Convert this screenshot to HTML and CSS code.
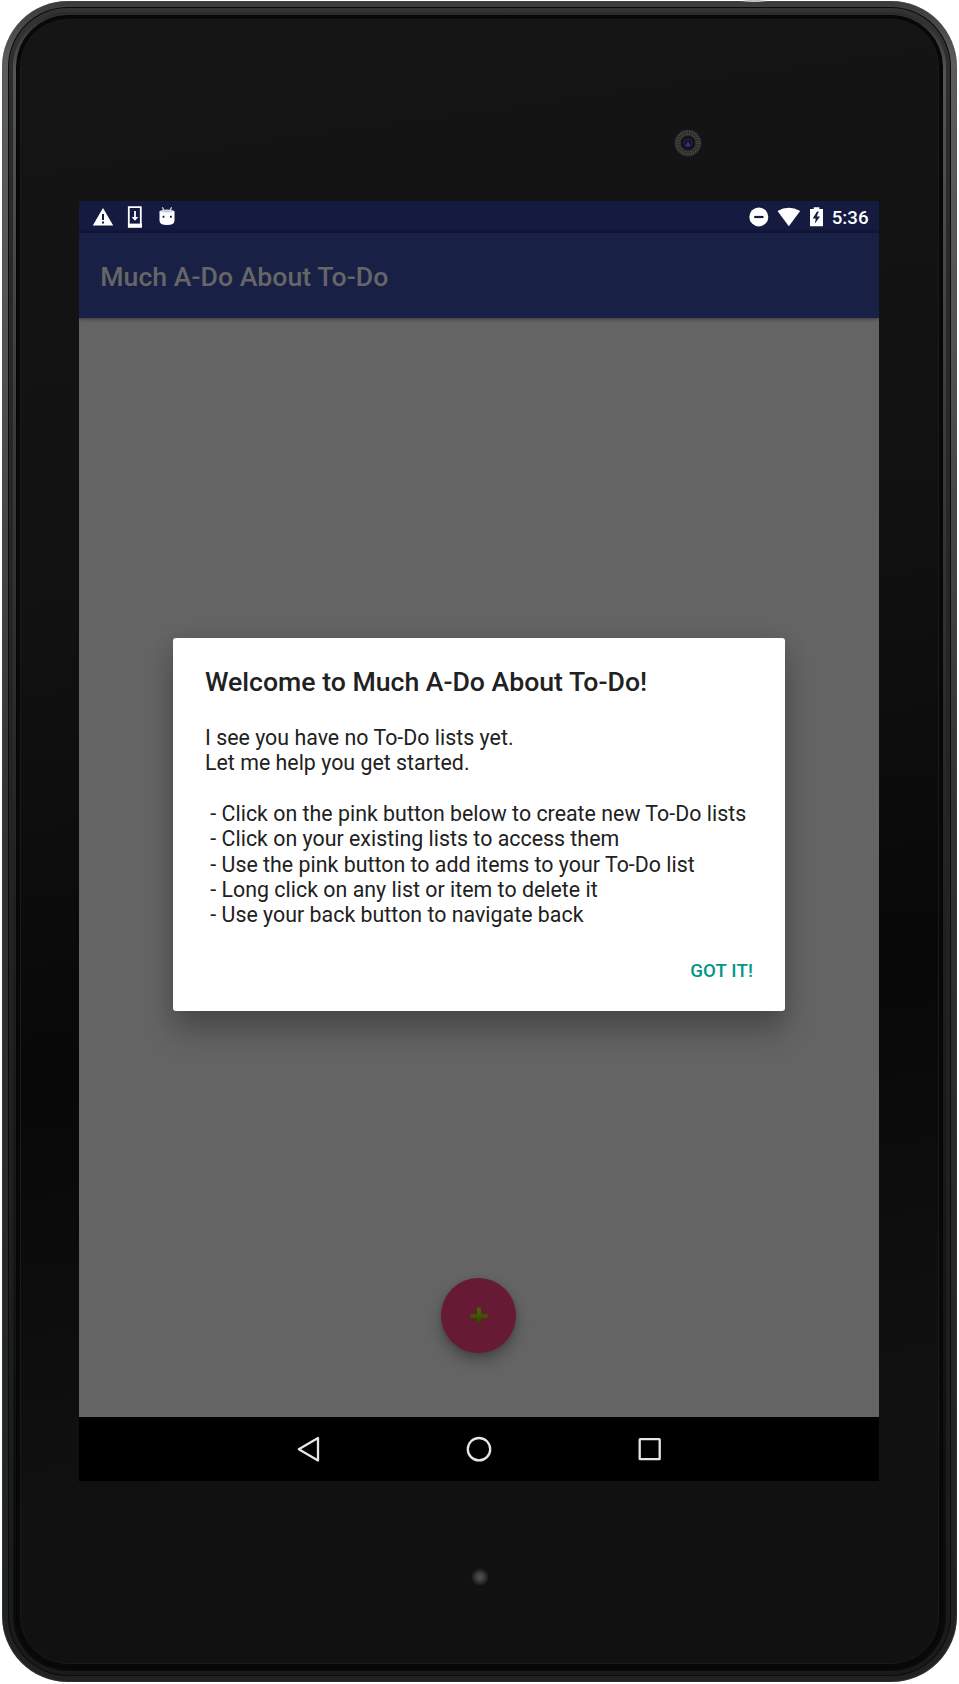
FILE: index.html
```html
<!DOCTYPE html>
<html lang="en">
<head>
<meta charset="utf-8">
<title>Much A-Do About To-Do</title>
<link rel="stylesheet" href="styles.css">
</head>
<body>
<div class="device">
  <div class="power-key"></div>
  <div class="groove"><div class="ring"><div class="highlight"><div class="glass">
    <svg class="camera" viewBox="0 0 28 28">
      <circle cx="14" cy="14" r="13.5" fill="#2c2c2c"/>
      <circle cx="14" cy="14" r="11.500" fill="none" stroke="#555" stroke-width="1.500" stroke-dasharray="1 1.3"/>
      <circle cx="14" cy="14" r="9" fill="none" stroke="#4c4c4c" stroke-width="1.500" stroke-dasharray="1.200 1.500"/>
      <circle cx="14" cy="14" r="7" fill="#111"/>
      <circle cx="14" cy="14" r="4" fill="#10101c" stroke="#303038"/>
      <path d="M11.500 17l2.500-5.500 2.500 5.500z" fill="#2630b0"/>
    </svg>
    <div class="screen">
      <div class="status">
        <svg class="status-left" viewBox="0 0 110 32">
          <path d="M13.8 24.6h20.4L24 7z" fill="#fff"/>
          <path d="M23 13h2v6h-2zM23 20.6h2v2h-2z" fill="#141a40"/>
          <path d="M49.8 6.2h12v19.5h-12z" fill="none" stroke="#fff" stroke-width="1.8"/>
          <path d="M49 22.6h14v4H49z" fill="#fff"/>
          <path d="M55.1 10h1.8v6h2.5L56 19.7 52.600 16h2.500z" fill="#fff"/>
          <path d="M83.400 6.200l1.400 3M92.600 6.200l-1.400 3" stroke="#d9dae3" stroke-width="1.300"/>
          <path d="M80.500 10Q88 7 95.500 10v9.500q0 4.500-7.500 4.500t-7.500-4.500z" fill="#fff"/>
          <path d="M81 10.300Q88 7.500 95 10.300 88 13 81 10.300z" fill="#cbccd9"/>
          <path d="M83.600 14.800h1.800v2h-1.800zM91 14.800h1.800v2H91z" fill="#141a40"/>
        </svg>
        <div class="status-right">
          <svg class="status-icons" viewBox="0 0 76 32">
            <circle cx="10.800" cy="15.900" r="9.500" fill="#fff"/>
            <path d="M6.200 14.900h9.300v2.200H6.200z" fill="#141a40"/>
            <path d="M29.500 9.900Q40.800 3.400 52.200 9.900L40.800 25.300z" fill="#fff"/>
            <path d="M62 8h3.700V6.200h5.700V8h3.600v17.300H62z" fill="#fff"/>
            <path d="M69 10.500l-4.300 7h3l-.8 5 5.200-7h-3.300l2-5z" fill="#141a40"/>
          </svg>
          <span class="time">5:36</span>
        </div>
      </div>
      <div class="appbar">Much A-Do About To-Do</div>
      <div class="content">
        <div class="dialog">
          <h1 class="dialog-title">Welcome to Much A-Do About To-Do!</h1>
          <div class="dialog-body">I see you have no To-Do lists yet.
Let me help you get started.

 - Click on the pink button below to create new To-Do lists
 - Click on your existing lists to access them
 - Use the pink button to add items to your To-Do list
 - Long click on any list or item to delete it
 - Use your back button to navigate back</div>
          <div class="dialog-action">GOT IT!</div>
        </div>
        <div class="fab">
          <svg class="plus" viewBox="0 0 18 18">
            <defs><linearGradient id="leaf" x1="0" y1="0" x2="0" y2="1"><stop offset="0" stop-color="#456600"/><stop offset=".45" stop-color="#3d5c00"/><stop offset="1" stop-color="#2b4300"/></linearGradient></defs>
            <path d="M7 .700h4v6.500h6.700V11H11v6H7v-6H.300V7.200H7z" fill="url(#leaf)"/>
          </svg>
        </div>
      </div>
      <div class="nav">
        <svg class="nav-icons" viewBox="0 0 440 64" fill="none" stroke="#e6e6e6" stroke-width="2.300" stroke-linejoin="round">
          <path d="M58 21v22.500L38.800 32.200z"/>
          <circle cx="219" cy="32.200" r="11.200"/>
          <rect x="379.700" y="22.200" width="20" height="20" rx=".5"/>
        </svg>
      </div>
    </div>
    <div class="led"></div>
  </div></div></div></div>
</div>
</body>
</html>
```
FILE: styles.css
```css
* { box-sizing: border-box; }
body {
  margin: 0;
  padding: 1px 2px 2px;
  background: #fff;
  font-family: Roboto, sans-serif;
  height: 1684px;
  overflow: hidden;
}
.device {
  position: relative;
  height: 1681px;
  padding: 6px;
  border-radius: 66px;
  background: linear-gradient(180deg, #393b3b 0, #5c5d5d 60px, #555 300px, #333 800px, #242525 1400px, #202121 100%);
  box-shadow: inset 0 0 2px #555;
}
.power-key {
  position: absolute;
  left: 738px;
  top: -1px;
  width: 28px;
  height: 2px;
  background: radial-gradient(ellipse at 50% 50%, #f4f4f4 0, #bbb 40%, transparent 75%);
}
.groove {
  height: 100%;
  padding: 1px;
  border-radius: 60px;
  background: #0b0b0b;
}
.ring {
  height: 100%;
  padding: 4px;
  border-radius: 59px;
  background: linear-gradient(180deg, #333 0, #2a2b2b 100px, #191a1a 100%);
}
.highlight {
  height: 100%;
  padding: 3px;
  border-radius: 55px;
  background: linear-gradient(180deg, #2a2a2a 0, #555 60px, #3c3c3c 400px, #202020 900px, #090909 100%);
}
.glass {
  position: relative;
  height: 100%;
  padding: 185px 62px 0;
  border: 1px solid #050505;
  border-radius: 52px;
  background: linear-gradient(172deg, #151515 0, #111 35%, #080808 60%, #111 85%, #111 100%);
  box-shadow: inset 0 0 0 3px #080808, inset 0 0 0 4px #1a1a1a;
}
.camera {
  position: absolute;
  left: 656.500px;
  top: 113px;
  width: 28px;
  height: 28px;
}
.screen {
  display: flex;
  flex-direction: column;
  width: 800px;
  height: 1280px;
  overflow: hidden;
}
.status {
  display: flex;
  justify-content: space-between;
  flex: none;
  height: 32px;
  background: linear-gradient(#141a40 28px, #11163a 32px);
}
.status-left { width: 110px; height: 32px; }
.status-right { display: flex; padding-right: 10.500px; }
.status-icons { width: 76px; height: 32px; margin-right: 8px; }
.time {
  color: #fff;
  font-size: 18.67px;
  font-weight: 500;
  line-height: 34px;
}
.appbar {
  position: relative;
  flex: none;
  height: 85px;
  padding-left: 21.3px;
  background: #192046;
  box-shadow: 0 1px 4px rgba(0, 0, 0, .45);
  color: #666;
  font-size: 26.67px;
  font-weight: 500;
  line-height: 89px;
}
.content {
  display: flex;
  flex-direction: column;
  align-items: center;
  flex: 1;
  min-height: 0;
  padding-top: 320px;
  background: #646464;
}
.dialog {
  flex: none;
  width: 612px;
  height: 372.500px;
  padding: 27.500px 32px 0;
  border-radius: 3px;
  background: #fff;
  box-shadow: 0 22px 30px rgba(0, 0, 0, .22), 0 4px 22px rgba(0, 0, 0, .12);
  color: #212121;
}
.dialog-title {
  margin: 0;
  font-size: 26.67px;
  font-weight: 500;
  letter-spacing: -.02px;
  line-height: 32px;
}
.dialog-body {
  margin-top: 27.500px;
  font-size: 21.33px;
  letter-spacing: .025px;
  line-height: 25.330px;
  white-space: pre;
}
.dialog-action {
  margin-top: 31px;
  color: #009688;
  font-size: 18.67px;
  font-weight: 500;
  letter-spacing: .1px;
  line-height: 24px;
  text-align: right;
}
.fab {
  display: flex;
  align-items: center;
  justify-content: center;
  flex: none;
  width: 75px;
  height: 75px;
  margin: 267.500px 1px 0 0;
  border-radius: 50%;
  background: #661a33;
  box-shadow: 0 8px 14px rgba(0, 0, 0, .27), 0 1px 5px rgba(0, 0, 0, .14);
}
.plus { width: 18px; height: 18px; }
.nav {
  display: flex;
  justify-content: center;
  flex: none;
  height: 64px;
  background: #000;
}
.nav-icons { width: 440px; height: 64px; margin-left: 2px; }
.led {
  width: 18px;
  height: 18px;
  margin: 86.500px 0 0 392px;
  border-radius: 50%;
  background: radial-gradient(circle, #505050 0, #3e3e3e 30%, transparent 72%);
}
```
